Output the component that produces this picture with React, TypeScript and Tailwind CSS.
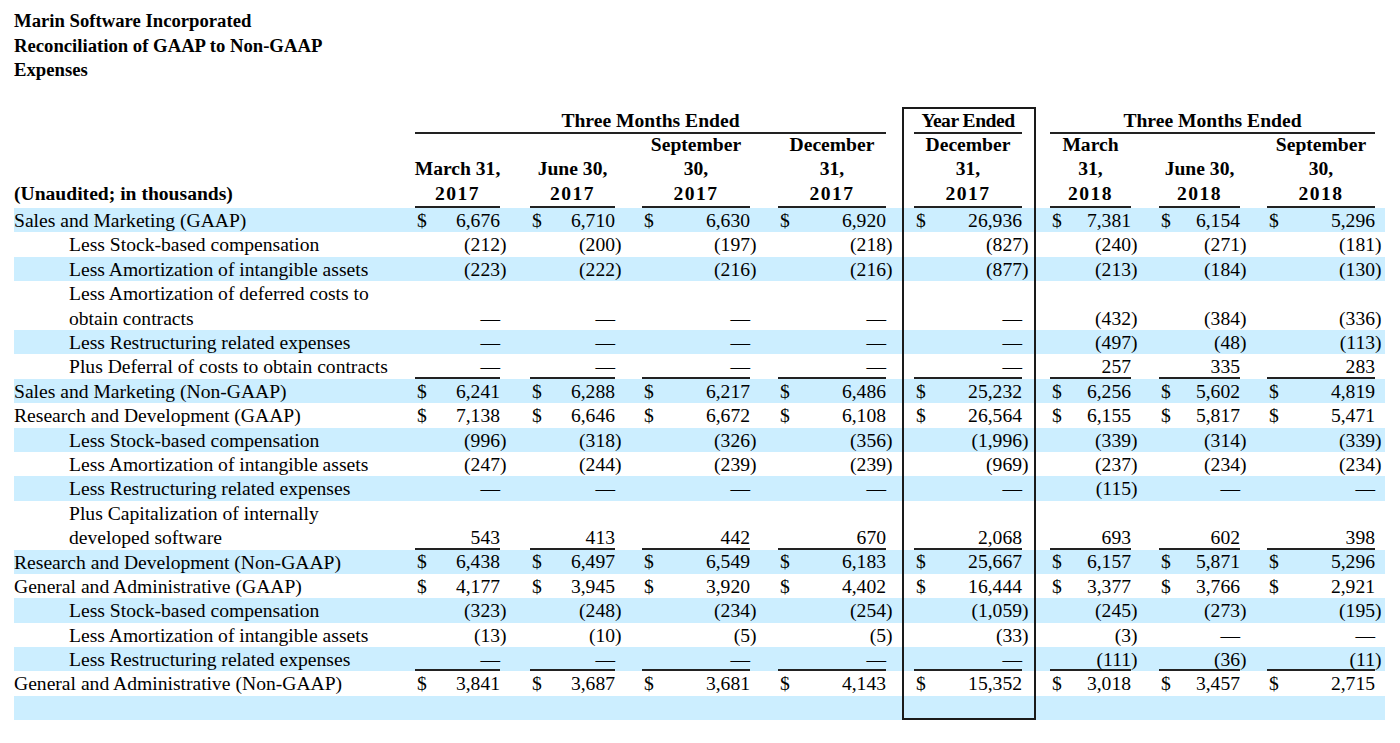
import { Fragment } from "react";
import clsx from "clsx";

type Row = {
  label: string[];
  indent?: boolean;
  vals: string[];
  dollar?: boolean;
  rule?: boolean;
};

const D = "—";

const rows: Row[] = [
  { label: ["Sales and Marketing (GAAP)"], dollar: true, vals: ["6,676", "6,710", "6,630", "6,920", "26,936", "7,381", "6,154", "5,296"] },
  { label: ["Less Stock-based compensation"], indent: true, vals: ["(212)", "(200)", "(197)", "(218)", "(827)", "(240)", "(271)", "(181)"] },
  { label: ["Less Amortization of intangible assets"], indent: true, vals: ["(223)", "(222)", "(216)", "(216)", "(877)", "(213)", "(184)", "(130)"] },
  { label: ["Less Amortization of deferred costs to", "obtain contracts"], indent: true, vals: [D, D, D, D, D, "(432)", "(384)", "(336)"] },
  { label: ["Less Restructuring related expenses"], indent: true, vals: [D, D, D, D, D, "(497)", "(48)", "(113)"] },
  { label: ["Plus Deferral of costs to obtain contracts"], indent: true, rule: true, vals: [D, D, D, D, D, "257", "335", "283"] },
  { label: ["Sales and Marketing (Non-GAAP)"], dollar: true, vals: ["6,241", "6,288", "6,217", "6,486", "25,232", "6,256", "5,602", "4,819"] },
  { label: ["Research and Development (GAAP)"], dollar: true, vals: ["7,138", "6,646", "6,672", "6,108", "26,564", "6,155", "5,817", "5,471"] },
  { label: ["Less Stock-based compensation"], indent: true, vals: ["(996)", "(318)", "(326)", "(356)", "(1,996)", "(339)", "(314)", "(339)"] },
  { label: ["Less Amortization of intangible assets"], indent: true, vals: ["(247)", "(244)", "(239)", "(239)", "(969)", "(237)", "(234)", "(234)"] },
  { label: ["Less Restructuring related expenses"], indent: true, vals: [D, D, D, D, D, "(115)", D, D] },
  { label: ["Plus Capitalization of internally", "developed software"], indent: true, rule: true, vals: ["543", "413", "442", "670", "2,068", "693", "602", "398"] },
  { label: ["Research and Development (Non-GAAP)"], dollar: true, vals: ["6,438", "6,497", "6,549", "6,183", "25,667", "6,157", "5,871", "5,296"] },
  { label: ["General and Administrative (GAAP)"], dollar: true, vals: ["4,177", "3,945", "3,920", "4,402", "16,444", "3,377", "3,766", "2,921"] },
  { label: ["Less Stock-based compensation"], indent: true, vals: ["(323)", "(248)", "(234)", "(254)", "(1,059)", "(245)", "(273)", "(195)"] },
  { label: ["Less Amortization of intangible assets"], indent: true, vals: ["(13)", "(10)", "(5)", "(5)", "(33)", "(3)", D, D] },
  { label: ["Less Restructuring related expenses"], indent: true, rule: true, vals: [D, D, D, D, D, "(111)", "(36)", "(11)"] },
  { label: ["General and Administrative (Non-GAAP)"], dollar: true, vals: ["3,841", "3,687", "3,681", "4,143", "15,352", "3,018", "3,457", "2,715"] },
  { label: [""], vals: ["", "", "", "", "", "", "", ""] },
];

const LEFT = [
  { w: "w-[85px]", gap: "mr-[22px]", head: ["March 31,", "2017"] },
  { w: "w-[85px]", gap: "mr-[19px]", head: ["June 30,", "2017"] },
  { w: "w-[108px]", gap: "mr-[20px]", head: ["September", "30,", "2017"] },
  { w: "w-[108px]", gap: "mr-[8px]", head: ["December", "31,", "2017"] },
];
const BOX_HEAD = ["December", "31,", "2017"];
const RIGHT = [
  { w: "w-[81px]", gap: "mr-[20px]", head: ["March", "31,", "2018"] },
  { w: "w-[81px]", gap: "mr-[19px]", head: ["June 30,", "2018"] },
  { w: "w-[108px]", gap: "", head: ["September", "30,", "2018"] },
];

function Val({ w, gap, v, dollar, rule }: { w: string; gap: string; v: string; dollar?: boolean; rule?: boolean }) {
  const paren = v.startsWith("(");
  const num = paren ? v.slice(0, -1) : v;
  return (
    <>
      <div className={clsx("flex h-full shrink-0 items-end justify-between", w, rule && "shadow-[inset_0_-2px_0_#222]")}>
        <span className="-mb-px pl-[2px]">{dollar ? "$" : ""}</span>
        <span className="-mb-px">{num}</span>
      </div>
      <div className={clsx("flex h-full w-[8px] shrink-0 items-end", gap)}>
        <span className="-mb-px">{paren ? ")" : ""}</span>
      </div>
    </>
  );
}

function Head({ w, gap, lines }: { w: string; gap: string; lines: string[] }) {
  return (
    <>
      <div className={clsx("flex h-full shrink-0 flex-col items-center justify-end whitespace-nowrap pb-[2px] font-bold shadow-[inset_0_-2px_0_#222]", w)}>
        {lines.map((l, i) => (
          <div key={i} className={/^\d{4}$/.test(l) ? "tracking-[1.5px]" : ""}>{l}</div>
        ))}
      </div>
      <div className={clsx("w-[8px] shrink-0", gap)} />
    </>
  );
}

export default function App() {
  return (
    <div className="min-h-screen bg-white pl-[14px] pt-[9px] font-['Liberation_Serif','Times_New_Roman',serif] text-black">
      <div className="text-[18.7px] font-bold leading-[24.5px]">
        <div>Marin Software Incorporated</div>
        <div>Reconciliation of GAAP to Non-GAAP</div>
        <div>Expenses</div>
      </div>

      <div className="mt-[24.5px] w-[1371px] text-[19.6px] leading-[24.4px]">
        {/* group headings */}
        <div className="flex h-[27px] font-bold leading-[24px]">
          <div className="w-[401px] shrink-0" />
          <div className="w-[471px] shrink-0 pt-[2px] text-center shadow-[inset_0_-2px_0_#222]">Three Months Ended</div>
          <div className="w-[16px] shrink-0" />
          <div className="mr-[14px] w-[134px] shrink-0 border-x-2 border-t-2 border-[#1a1a1a] pl-[10px]">
            <div className="h-full w-[108px] text-center tracking-[-0.5px] shadow-[inset_0_-2px_0_#222]">Year Ended</div>
          </div>
          <div className="w-[325px] shrink-0 pt-[2px] text-center shadow-[inset_0_-2px_0_#222]">Three Months Ended</div>
        </div>

        {/* column headings */}
        <div className="flex h-[74px]">
          <div className="flex w-[401px] shrink-0 items-end pb-[2px] font-bold">(Unaudited; in thousands)</div>
          {LEFT.map((c, i) => (
            <Head key={i} w={c.w} gap={c.gap} lines={c.head} />
          ))}
          <div className="mr-[14px] flex h-full w-[134px] shrink-0 border-x-2 border-[#1a1a1a] pl-[10px]">
            <Head w="w-[108px]" gap="" lines={BOX_HEAD} />
          </div>
          {RIGHT.map((c, i) => (
            <Head key={i} w={c.w} gap={c.gap} lines={c.head} />
          ))}
        </div>

        {/* body */}
        {rows.map((r, ri) => {
          const last = ri === rows.length - 1;
          return (
            <div
              key={ri}
              className={clsx("flex", r.label.length > 1 ? "h-[48.8px]" : "h-[24.4px]", ri % 2 === 0 && "bg-[#cceeff]")}
            >
              <div className={clsx("w-[401px] shrink-0 whitespace-nowrap pt-[1px]", r.indent && "pl-[55px]")}>
                {r.label.map((l, i) => (
                  <Fragment key={i}>
                    {i > 0 && <br />}
                    {l}
                  </Fragment>
                ))}
              </div>
              {LEFT.map((c, i) => (
                <Val key={i} w={c.w} gap={c.gap} v={r.vals[i]} dollar={r.dollar} rule={r.rule} />
              ))}
              <div className={clsx("mr-[14px] flex h-full w-[134px] shrink-0 border-x-2 border-[#1a1a1a] pl-[10px]", last && "border-b-2")}>
                <Val w="w-[108px]" gap="" v={r.vals[4]} dollar={r.dollar} rule={r.rule} />
              </div>
              {RIGHT.map((c, i) => (
                <Val key={i} w={c.w} gap={c.gap} v={r.vals[5 + i]} dollar={r.dollar} rule={r.rule} />
              ))}
            </div>
          );
        })}
      </div>
    </div>
  );
}
